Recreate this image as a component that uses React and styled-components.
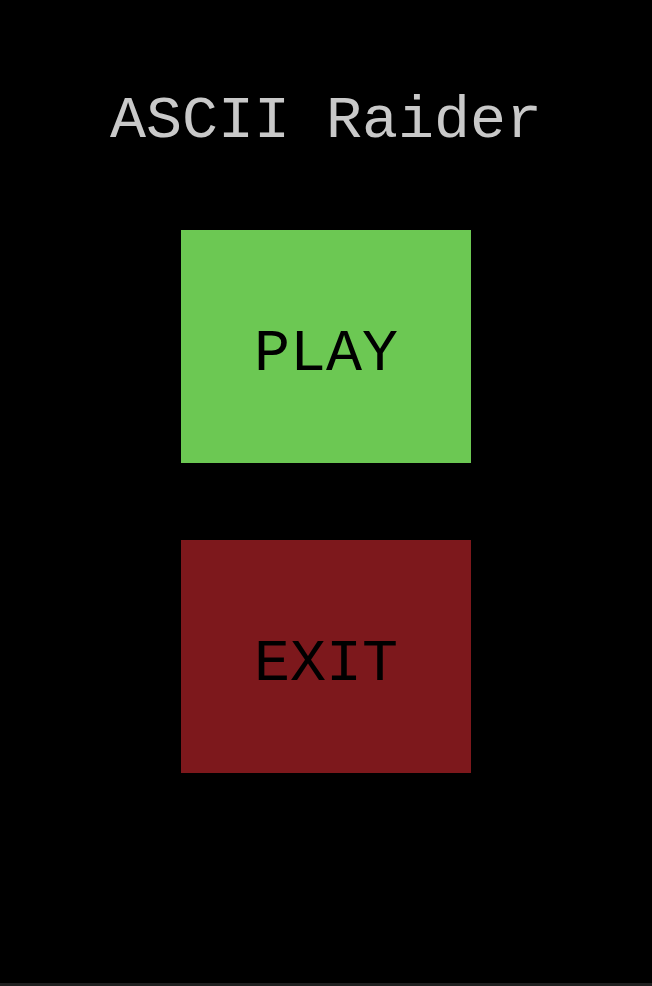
import React from "react";
import styled, {createGlobalStyle} from "styled-components";

const GlobalStyle = createGlobalStyle`
  html, body {
    margin: 0;
    padding: 0;
    background: #000;
  }
  * {
    box-sizing: border-box;
  }
`

const App = () => {
    return (
        <StyledScreen>
            <GlobalStyle/>
            <Title>ASCII Raider</Title>
            <Menu>
                <MenuButton color="#6cc853">PLAY</MenuButton>
                <MenuButton color="#7d181c">EXIT</MenuButton>
            </Menu>
        </StyledScreen>
    )
}
export default App

const StyledScreen = styled.div`
  display: flex;
  flex-direction: column;
  align-items: center;
  height: 986px;
  padding-top: 91px;
  background: #000;
  border-bottom: 3px solid #202020;
  font-family: "Courier New", "Liberation Mono", monospace;
`

const Title = styled.h1`
  margin: 0;
  font-size: 60px;
  line-height: 60px;
  font-weight: normal;
  color: #c9c9c9;
`

const Menu = styled.div`
  display: flex;
  flex-direction: column;
  gap: 77px;
  margin-top: 79px;
`

const MenuButton = styled.button`
  display: flex;
  align-items: center;
  justify-content: center;
  width: 290px;
  height: 233px;
  padding: 14px 0 0 0;
  border: none;
  background: ${props => props.color};
  color: #000;
  font-family: inherit;
  font-size: 60px;
  line-height: 60px;
  cursor: pointer;
`
